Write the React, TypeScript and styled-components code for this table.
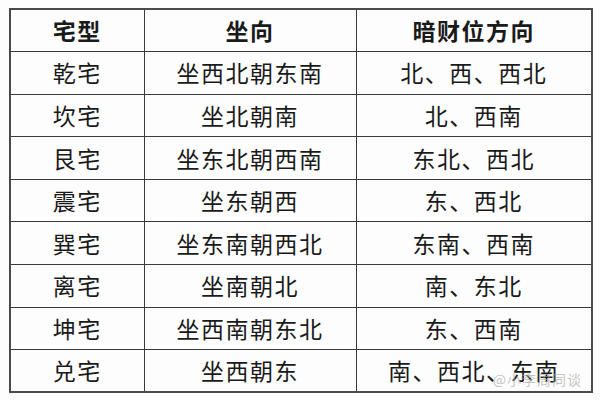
import React from "react";
import styled, { createGlobalStyle } from "styled-components";

const Global = createGlobalStyle`
  html, body { margin: 0; padding: 0; background: #fdfdfd; }
  body { font-family: "Noto Sans CJK SC", "Noto Sans", sans-serif; }
`;

const Page = styled.div`
  width: 600px;
  height: 400px;
  padding: 8px 0 0 9px;
  box-sizing: border-box;
  position: relative;
  overflow: hidden;
`;

const Table = styled.table`
  border-collapse: collapse;
  width: 582px;
  table-layout: fixed;
  color: #1a1a1a;
  border: 2px solid #4a4a4a;
`;

const Row = styled.tr`
  height: 42.6px;
`;

const Cell = styled.td<{ $head?: boolean }>`
  border: 1.5px solid #3a3a3a;
  padding: 0;
  text-align: center;
  vertical-align: middle;
  font-size: 23px;
  letter-spacing: 1.5px;
  line-height: 1;
  font-weight: ${(p) => (p.$head ? 700 : 400)};
`;

const Watermark = styled.div`
  position: absolute;
  right: 18px;
  bottom: 11px;
  font-size: 14px;
  color: rgba(170, 170, 170, 0.7);
  letter-spacing: 1px;
  font-family: "Noto Sans CJK SC", sans-serif;
`;

const rows: [string, string, string][] = [
  ["乾宅", "坐西北朝东南", "北、西、西北"],
  ["坎宅", "坐北朝南", "北、西南"],
  ["艮宅", "坐东北朝西南", "东北、西北"],
  ["震宅", "坐东朝西", "东、西北"],
  ["巽宅", "坐东南朝西北", "东南、西南"],
  ["离宅", "坐南朝北", "南、东北"],
  ["坤宅", "坐西南朝东北", "东、西南"],
  ["兑宅", "坐西朝东", "南、西北、东南"],
];

export default function App() {
  return (
    <Page>
      <Global />
      <Table>
        <colgroup>
          <col style={{ width: 134 }} />
          <col style={{ width: 212 }} />
          <col style={{ width: 236 }} />
        </colgroup>
        <tbody>
          <Row>
            <Cell $head>宅型</Cell>
            <Cell $head>坐向</Cell>
            <Cell $head>暗财位方向</Cell>
          </Row>
          {rows.map((r) => (
            <Row key={r[0]}>
              <Cell>{r[0]}</Cell>
              <Cell>{r[1]}</Cell>
              <Cell>{r[2]}</Cell>
            </Row>
          ))}
        </tbody>
      </Table>
      <Watermark>@小李周同谈</Watermark>
    </Page>
  );
}
